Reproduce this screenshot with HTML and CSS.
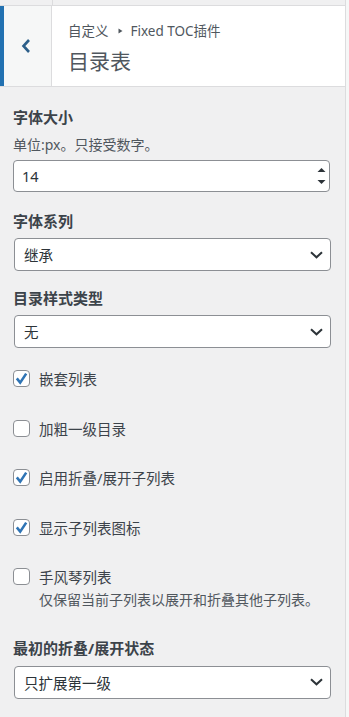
FILE: index.html
```html
<!DOCTYPE html>
<html lang="zh-CN">
<head>
<meta charset="utf-8">
<title>目录表</title>
<link rel="stylesheet" href="styles.css">
</head>
<body>
<div class="panel">
  <div class="topstrip"><div class="topstrip-left"></div></div>
  <div class="header">
    <div class="accent"></div>
    <div class="back">
      <svg width="10" height="16" viewBox="0 0 10 16"><path d="M8 2 L2.5 8 L8 14" fill="none" stroke="#2c5f8a" stroke-width="2.6" stroke-linejoin="miter"/></svg>
    </div>
    <div class="titles">
      <div class="crumb">自定义<svg class="tri" width="5" height="6" viewBox="0 0 5 6"><path d="M0.5 0.5 L4.5 3 L0.5 5.5 Z" fill="#50575e"/></svg>Fixed TOC插件</div>
      <div class="title">目录表</div>
    </div>
  </div>

  <div class="controls">
    <div class="label">字体大小</div>
    <div class="desc desc-first">单位:px。只接受数字。</div>
    <div class="field number">
      <span class="value">14</span>
      <svg class="spin" width="9" height="18" viewBox="0 0 9 18"><path d="M0.5 5 L4.5 1 L8.5 5 Z" fill="#2c3338"/><path d="M0.5 13 L4.5 17 L8.5 13 Z" fill="#2c3338"/></svg>
    </div>

    <div class="label after-field">字体系列</div>
    <div class="field select">
      <span class="value">继承</span>
      <svg class="chev" width="13" height="8" viewBox="0 0 13 8"><path d="M1 1.2 L6.5 6.3 L12 1.2" fill="none" stroke="#2c3338" stroke-width="2"/></svg>
    </div>

    <div class="label after-select">目录样式类型</div>
    <div class="field select">
      <span class="value">无</span>
      <svg class="chev" width="13" height="8" viewBox="0 0 13 8"><path d="M1 1.2 L6.5 6.3 L12 1.2" fill="none" stroke="#2c3338" stroke-width="2"/></svg>
    </div>

    <div class="checks">
      <div class="check-row">
        <span class="box"><svg width="17" height="17" viewBox="0 0 17 17"><path d="M3.8 8.4 L7.2 12.6 L13.2 3.6" fill="none" stroke="#2f74b5" stroke-width="2.6"/></svg></span>
        <span class="check-label">嵌套列表</span>
      </div>
      <div class="check-row">
        <span class="box"></span>
        <span class="check-label">加粗一级目录</span>
      </div>
      <div class="check-row">
        <span class="box"><svg width="17" height="17" viewBox="0 0 17 17"><path d="M3.8 8.4 L7.2 12.6 L13.2 3.6" fill="none" stroke="#2f74b5" stroke-width="2.6"/></svg></span>
        <span class="check-label">启用折叠/展开子列表</span>
      </div>
      <div class="check-row">
        <span class="box"><svg width="17" height="17" viewBox="0 0 17 17"><path d="M3.8 8.4 L7.2 12.6 L13.2 3.6" fill="none" stroke="#2f74b5" stroke-width="2.6"/></svg></span>
        <span class="check-label">显示子列表图标</span>
      </div>
      <div class="check-row">
        <span class="box"></span>
        <span class="check-label">手风琴列表</span>
      </div>
    </div>
    <div class="desc check-desc">仅保留当前子列表以展开和折叠其他子列表。</div>

    <div class="label after-desc">最初的折叠/展开状态</div>
    <div class="field select last">
      <span class="value">只扩展第一级</span>
      <svg class="chev" width="13" height="8" viewBox="0 0 13 8"><path d="M1 1.2 L6.5 6.3 L12 1.2" fill="none" stroke="#2c3338" stroke-width="2"/></svg>
    </div>
  </div>
</div>
</body>
</html>
```

FILE: styles.css
```css
html, body {
  margin: 0;
  padding: 0;
}

body {
  background: #f6f7f7;
  font-family: "Noto Sans", "Noto Sans CJK SC", sans-serif;
  color: #3c434a;
}

.panel {
  width: 345px;
  min-height: 717px;
  background: #f0f0f1;
  border-right: 1px solid #dcdcde;
}

.topstrip {
  height: 5px;
  border-bottom: 1px solid #dcdcde;
  display: flex;
}

.topstrip-left {
  width: 52px;
  border-right: 1px solid #dcdcde;
}

.header {
  display: flex;
  height: 80px;
  background: #fff;
  border-bottom: 1px solid #dcdcde;
}

.accent {
  width: 4px;
  background: #2271b1;
}

.back {
  width: 48px;
  background: #f6f7f7;
  border-right: 1px solid #dcdcde;
  display: flex;
  align-items: center;
  justify-content: center;
  padding-right: 3px;
  box-sizing: border-box;
}

.titles {
  padding: 15px 0 0 16px;
}

.crumb {
  font-size: 13.5px;
  line-height: 20px;
  color: #50575e;
  display: flex;
  align-items: center;
}

.crumb .tri {
  margin: 0 8px 0 9px;
}

.title {
  margin-top: 5px;
  font-size: 21px;
  line-height: 30px;
  color: #50575e;
}

.controls {
  padding: 20px 0 0 13px;
}

.label {
  font-size: 15px;
  line-height: 20px;
  font-weight: 700;
  color: #3c434a;
}

.desc {
  font-size: 14px;
  line-height: 18px;
  color: #50575e;
}

.desc-first {
  margin-top: 9px;
}

.field {
  width: 317px;
  box-sizing: border-box;
  background: #fff;
  border: 1px solid #8c8f94;
  border-radius: 4px;
  display: flex;
  align-items: center;
  justify-content: space-between;
  font-size: 14.5px;
  color: #2c3338;
}

.number {
  height: 32px;
  margin-top: 6px;
  padding: 0 3px 0 8px;
}

.select {
  height: 33px;
  margin-top: 7px;
  margin-left: 1px;
  padding: 0 7px 0 9px;
}

.select.last {
  margin-top: 7.5px;
}

.after-field {
  margin-top: 19px;
}

.after-select {
  margin-top: 17px;
}

.checks {
  margin-top: 20.5px;
  display: flex;
  flex-direction: column;
  gap: 29.5px;
}

.check-row {
  display: flex;
  align-items: center;
  height: 20px;
}

.box {
  width: 17px;
  height: 17px;
  box-sizing: border-box;
  border: 1px solid #8c8f94;
  border-radius: 4px;
  background: #fff;
  position: relative;
  flex: none;
}

.box svg {
  position: absolute;
  left: -1px;
  top: -1px;
}

.check-label {
  margin-left: 9px;
  font-size: 14.5px;
  color: #3c434a;
}

.check-desc {
  margin-top: 4px;
  padding-left: 26px;
}

.after-desc {
  margin-top: 29.5px;
}
```
